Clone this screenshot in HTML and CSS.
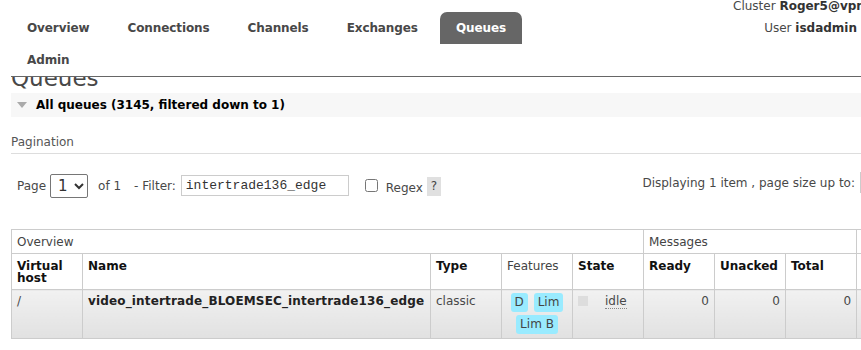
FILE: index.html
```html
<!DOCTYPE html>
<html>
<head>
<meta charset="utf-8">
	<title>RabbitMQ Management</title>
	<link rel="stylesheet" href="styles.css">
</head>
<body>
	<div id="outer">
		<div id="header">
			<ul id="tabs">
				<li>Overview</li>
				<li>Connections</li>
				<li>Channels</li>
				<li>Exchanges</li>
				<li class="selected">Queues</li>
				<li>Admin</li>
			</ul>
			<ul id="topnav">
				<li>Cluster <b>Roger5@vpnsrv01</b></li>
				<li class="user">User <b>isdadmin</b></li>
			</ul>
		</div>

		<div id="main">
			<div class="title"><h1>Queues</h1></div>

			<h2 class="section-head"><span class="arrow"></span>All queues (3145, filtered down to 1)</h2>

			<h3 class="sub-head">Pagination</h3>
			<div class="pager">
				<div class="pager-left">
					<span>Page</span>
					<select class="page-select"><option>1</option></select>
					<span class="of">of 1</span>
					<span class="filter-label">- Filter:</span>
					<input class="filter" type="text" value="intertrade136_edge">
					<input class="regex" type="checkbox">
					<span class="regex-label">Regex</span>
					<span class="help">?</span>
				</div>
				<div class="pager-right">
					<span>Displaying 1 item , page size up to:</span>
					<input class="page-size" type="text" value="100">
				</div>
			</div>

			<table class="list">
				<colgroup>
					<col class="c-std"><col class="c-name"><col class="c-std"><col class="c-std"><col class="c-std"><col class="c-std"><col class="c-std"><col class="c-std"><col class="c-std"><col class="c-std"><col class="c-std">
				</colgroup>
				<thead>
					<tr class="group">
						<th colspan="5">Overview</th>
						<th colspan="3">Messages</th>
						<th colspan="3">Message rates</th>
					</tr>
					<tr>
						<th>Virtual host</th>
						<th>Name</th>
						<th>Type</th>
						<th class="plain">Features</th>
						<th>State</th>
						<th>Ready</th>
						<th>Unacked</th>
						<th>Total</th>
						<th>incoming</th>
						<th>deliver / get</th>
						<th>ack</th>
					</tr>
				</thead>
				<tbody>
					<tr>
						<td>/</td>
						<td class="qname">video_intertrade_BLOEMSEC_intertrade136_edge</td>
						<td>classic</td>
						<td class="features">
							<abbr class="feature">D</abbr>
							<abbr class="feature">Lim</abbr>
							<abbr class="feature">Lim B</abbr>
						</td>
						<td><span class="dot"></span><abbr class="state">idle</abbr></td>
						<td class="num">0</td>
						<td class="num">0</td>
						<td class="num">0</td>
						<td class="num">0.00/s</td>
						<td class="num">0.00/s</td>
						<td class="num">0.00/s</td>
					</tr>
				</tbody>
			</table>
		</div>
	</div>
</body>
</html>
```

FILE: styles.css
```css
*{
	margin: 0;
	padding: 0;
}
html,body{
	overflow: hidden;
}
body{
	font-family: "DejaVu Sans", Verdana, sans-serif;
	font-size: 12px;
	color: #484848;
	background: #fff;
}
#outer{
	width: 1080px;
	padding-left: 11px;
}

/* header */
#header{
	display: flex;
	height: 76px;
	border-bottom: 1px solid #666;
}
#tabs{
	display: flex;
	flex-wrap: wrap;
	width: 560px;
	padding-top: 12px;
	list-style: none;
	align-content: flex-start;
}
#tabs li{
	height: 32px;
	line-height: 33px;
	padding: 0 16px;
	margin-right: 6px;
	font-weight: bold;
	color: #484848;
	letter-spacing: -0.1px;
}
#tabs li.selected{
	background: #666;
	color: #fff;
	border-radius: 7px 7px 0 0;
}
#topnav{
	list-style: none;
	width: 124px;
	margin-left: 162px;
	text-align: right;
	white-space: nowrap;
	line-height: 12px;
}
#topnav b{
	color: #333;
}
#topnav li.user{
	margin-top: 10px;
}

/* title, clipped under the header */
.title{
	height: 16px;
	overflow: hidden;
}
.title h1{
	font-size: 23px;
	font-weight: normal;
	line-height: 23px;
	margin-top: -10px;
	color: #484848;
}

.section-head{
	height: 24px;
	line-height: 24px;
	background: #f7f7f7;
	padding-left: 6px;
	font-size: 12px;
	color: #000;
}
.arrow{
	display: inline-block;
	width: 0;
	height: 0;
	border-left: 5px solid transparent;
	border-right: 5px solid transparent;
	border-top: 6px solid #aaa;
	margin-right: 9px;
	vertical-align: 1px;
}

.sub-head{
	margin-top: 19px;
	padding-bottom: 5px;
	border-bottom: 1px solid #ddd;
	font-size: 12px;
	font-weight: normal;
	line-height: 12px;
	color: #555;
}

/* pagination row */
.pager{
	display: flex;
	align-items: center;
	width: 883px;
	margin-top: 18px;
	padding-left: 6px;
}
.pager-left{
	display: flex;
	align-items: center;
}
.page-select{
	width: 38px;
	height: 24px;
	margin: 0 10px 0 4px;
	font-family: "DejaVu Sans", Verdana, sans-serif;
	font-size: 15px;
	color: #333;
	border: 1px solid #767676;
	border-radius: 2px;
	padding-left: 3px;
	background: #fff;
}
.of{
	margin-right: 13px;
}
.filter-label{
	margin-right: 5px;
}
.filter{
	width: 168px;
	height: 21px;
	box-sizing: border-box;
	border: 1px solid #ccc;
	padding: 0 4px;
	font-family: "Liberation Mono", monospace;
	font-size: 13px;
	color: #333;
	margin-right: 16px;
}
.regex{
	width: 13px;
	height: 13px;
	margin: 0 8px 0 0;
}
.regex-label{
	margin-right: 4px;
	margin-top: 4px;
}
.help{
	display: inline-block;
	height: 19px;
	line-height: 19px;
	padding: 0 4px;
	background: #e0e0e0;
	color: #444;
	margin-top: 2px;
}
.pager-right{
	display: flex;
	align-items: center;
	margin-left: auto;
	margin-bottom: 6px;
}
.page-size{
	width: 40px;
	height: 21px;
	box-sizing: border-box;
	margin-left: 5px;
	border: 1px solid #ccc;
	padding: 0 4px;
	font-family: "DejaVu Sans", Verdana, sans-serif;
	font-size: 12px;
}

/* queue table */
table.list{
	margin-top: 30px;
	border-collapse: collapse;
	table-layout: fixed;
	width: 1058px;
}
col.c-std{
	width: 71px;
}
col.c-name{
	width: 348px;
}
table.list th,
table.list td{
	border: 1px solid #ccc;
	text-align: left;
	vertical-align: top;
}
table.list th{
	padding: 6px 5px 5px;
	line-height: 12px;
	color: #111;
	font-weight: bold;
}
table.list tr.group th,
table.list th.plain{
	font-weight: normal;
	color: #444;
}
table.list td{
	padding: 3px 5px 1px;
	line-height: 16px;
	background: linear-gradient(to bottom, #f1f1f1, #e1e1e1);
	white-space: nowrap;
}
table.list td.qname{
	font-weight: bold;
	color: #222;
	letter-spacing: 0.15px;
}
table.list td.num{
	text-align: right;
}
table.list td.features{
	text-align: center;
	white-space: normal;
}
abbr.feature{
	display: inline-block;
	vertical-align: top;
	padding: 2px 4px;
	line-height: 15px;
	margin: 0 1px 3px;
	background: #99ebff;
	border-radius: 3px;
	color: #444;
	text-decoration: none;
}
.dot{
	display: inline-block;
	width: 10px;
	height: 10px;
	background: #ddd;
	margin-right: 17px;
	vertical-align: -1px;
}
abbr.state{
	text-decoration: none;
	border-bottom: 1px dotted #888;
}
```
